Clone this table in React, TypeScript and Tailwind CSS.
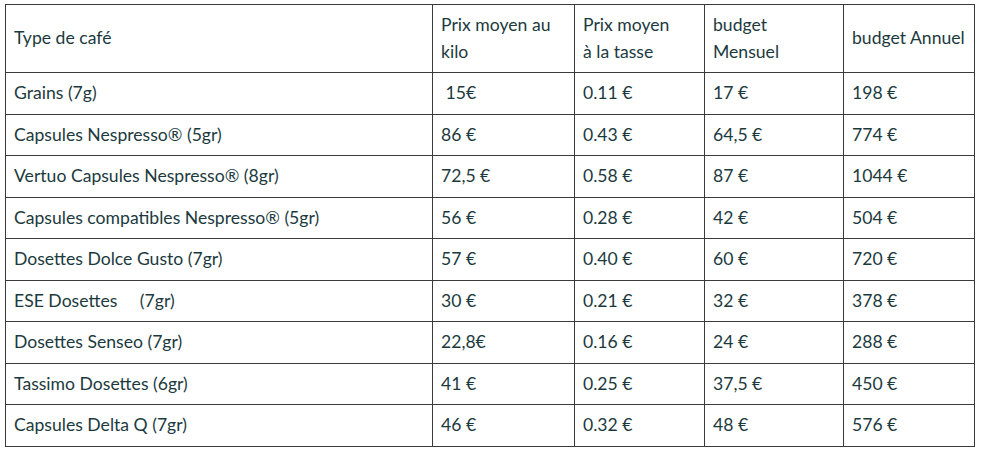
import React from "react";

const rows: string[][] = [
  ["Grains (7g)", "\u00a015€", "0.11 €", "17 €", "198 €"],
  ["Capsules Nespresso® (5gr)", "86 €", "0.43 €", "64,5 €", "774 €"],
  ["Vertuo Capsules Nespresso® (8gr)", "72,5 €", "0.58 €", "87 €", "1044 €"],
  ["Capsules compatibles Nespresso® (5gr)", "56 €", "0.28 €", "42 €", "504 €"],
  ["Dosettes Dolce Gusto (7gr)", "57 €", "0.40 €", "60 €", "720 €"],
  ["ESE Dosettes\u00a0\u00a0\u00a0\u00a0 (7gr)", "30 €", "0.21 €", "32 €", "378 €"],
  ["Dosettes Senseo (7gr)", "22,8€", "0.16 €", "24 €", "288 €"],
  ["Tassimo Dosettes (6gr)", "41 €", "0.25 €", "37,5 €", "450 €"],
  ["Capsules Delta Q (7gr)", "46 €", "0.32 €", "48 €", "576 €"],
];

const cell = "border border-[#3a3a3a] pl-[8px] pr-[6px] py-[7px] align-middle text-left font-normal";

export default function App() {
  return (
    <div className="bg-white w-[985px] h-[452px] pt-[4px] pl-[5px]" style={{ fontFamily: "Lato, 'Open Sans', sans-serif" }}>
      <table className="border-collapse text-[17.6px] leading-[26.5px] text-[#1c3a3e] w-[969px] table-fixed">
        <colgroup>
          <col className="w-[427px]" />
          <col className="w-[142px]" />
          <col className="w-[130px]" />
          <col className="w-[139px]" />
          <col className="w-[131px]" />
        </colgroup>
        <thead>
          <tr>
            <th className={cell}>Type de café</th>
            <th className={cell}>Prix moyen au<br />kilo</th>
            <th className={cell}>Prix moyen<br />à la tasse</th>
            <th className={cell}>budget<br />Mensuel</th>
            <th className={cell}>budget Annuel</th>
          </tr>
        </thead>
        <tbody>
          {rows.map((r, i) => (
            <tr key={i}>
              {r.map((c, j) => (
                <td key={j} className={cell + " whitespace-pre"}>{c}</td>
              ))}
            </tr>
          ))}
        </tbody>
      </table>
    </div>
  );
}
